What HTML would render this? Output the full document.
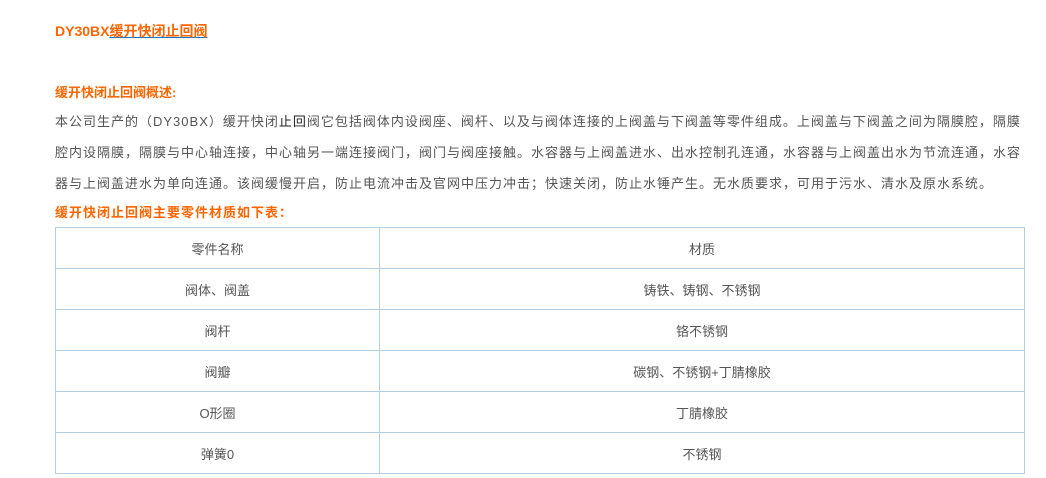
<!DOCTYPE html>
<html><head><meta charset="utf-8"><style>
body{margin:0;background:#fff;font-family:"Liberation Sans","Noto Sans CJK SC",sans-serif;color:#555;font-size:13px;width:1046px;height:478px;overflow:hidden;position:relative}
.o{color:#f60;font-weight:bold}
.a{position:absolute;left:55px;white-space:nowrap}
table{position:absolute;left:55px;top:227px;width:970px;border-collapse:collapse}
td{border:1px solid #b5cde0;height:40px;text-align:center;color:#555;padding:0}
</style></head><body>
<div class="a o" style="top:21px;font-size:14px">DY30BX<span style="text-decoration:underline;text-decoration-color:#1a73c0">缓开快闭止回阀</span></div>
<div class="a o" style="top:82px">缓开快闭止回阀概述:</div>
<div class="a" style="top:106px;line-height:31px;letter-spacing:1px">本公司生产的（DY30BX）缓开快闭<span style="color:#222">止回</span>阀它包括阀体内设阀座、阀杆、以及与阀体连接的上阀盖与下阀盖等零件组成。上阀盖与下阀盖之间为隔膜腔，隔膜<br>腔内设隔膜，隔膜与中心轴连接，中心轴另一端连接阀门，阀门与阀座接触。水容器与上阀盖进水、出水控制孔连通，水容器与上阀盖出水为节流连通，水容<br>器与上阀盖进水为单向连通。该阀缓慢开启，防止电流冲击及官网中压力冲击；快速关闭，防止水锤产生。无水质要求，可用于污水、清水及原水系统。</div>
<div class="a o" style="top:202px;letter-spacing:1px">缓开快闭止回阀主要零件材质如下表：</div>
<table>
<tr><td style="width:323px">零件名称</td><td>材质</td></tr>
<tr><td>阀体、阀盖</td><td>铸铁、铸钢、不锈钢</td></tr>
<tr><td>阀杆</td><td>铬不锈钢</td></tr>
<tr><td>阀瓣</td><td>碳钢、不锈钢+丁腈橡胶</td></tr>
<tr><td>O形圈</td><td>丁腈橡胶</td></tr>
<tr><td>弹簧0</td><td>不锈钢</td></tr>
</table>
</body></html>
